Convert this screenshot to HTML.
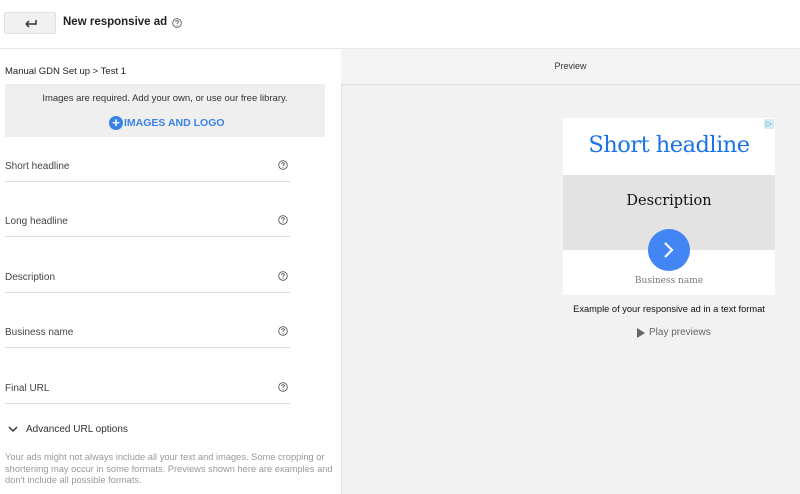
<!DOCTYPE html>
<html><head><style>
*{margin:0;padding:0;box-sizing:border-box}
body{width:800px;height:494px;overflow:hidden;background:#fff;font-family:"Liberation Sans",sans-serif;position:relative;color:#222}
.a{position:absolute}
.help{position:absolute;width:10px;height:10px}
.lbl{position:absolute;left:5px;font-size:10px;color:#444}
.ln{position:absolute;left:5px;width:285px;height:1px;background:#ddd}
.serif{font-family:"DejaVu Serif","Liberation Serif",serif}
</style></head><body>
<svg width="0" height="0" style="position:absolute"><defs><symbol id="h" viewBox="0 0 10 10"><circle cx="5" cy="5" r="4.3" fill="none" stroke="#555" stroke-width="0.9"/><path d="M3.6 4Q3.6 2.7 5 2.7Q6.4 2.7 6.4 3.9Q6.4 4.6 5.5 5Q5 5.3 5 6" fill="none" stroke="#555" stroke-width="0.9"/><circle cx="5" cy="7.3" r="0.55" fill="#555"/></symbol></defs></svg>
<div class="a" style="left:4px;top:12px;width:52px;height:22px;background:#f1f1f1;border:1px solid #e0e0e0;border-radius:2px"><svg class="a" style="left:20px;top:6px" width="12" height="9" viewBox="0 0 12 9"><path d="M1 5H11V1M1 5L4 2M1 5L4 8" fill="none" stroke="#333" stroke-width="1.5"/></svg></div>
<div class="a" style="left:63px;top:16px;font-size:11.5px;font-weight:bold;color:#222">New responsive ad</div>
<svg class="help" style="left:172px;top:18px"><use href="#h"/></svg>
<div class="a" style="left:0;top:48px;width:800px;height:1px;background:#e8e8e8"></div>
<div class="a" style="left:341px;top:49px;width:459px;height:445px;background:#f2f2f2;border-left:1px solid #e3e3e3"></div>
<div class="a" style="left:341px;top:49px;width:459px;height:36px;background:#f4f4f4;border-bottom:1px solid #dcdcdc;font-size:9px;text-align:center;line-height:34px;color:#333">Preview</div>
<div class="a" style="left:5px;top:66px;font-size:9.5px;color:#222">Manual GDN Set up &gt; Test 1</div>
<div class="a" style="left:5px;top:84px;width:320px;height:53px;background:#efefef"></div>
<div class="a" style="left:5px;top:93px;width:320px;text-align:center;font-size:9.5px;color:#333">Images are required. Add your own, or use our free library.</div>
<div class="a" style="left:109px;top:116px;width:14px;height:14px;border-radius:50%;background:#3b82e6;color:#fff;font-size:13px;line-height:14px;text-align:center;font-weight:bold">+</div>
<div class="a" style="left:124px;top:117px;font-size:10.5px;font-weight:bold;color:#3b82e6">IMAGES AND LOGO</div>

<div class="lbl" style="top:161px">Short headline</div><svg class="help" style="left:278px;top:160px"><use href="#h"/></svg><div class="ln" style="top:181px"></div>
<div class="lbl" style="top:216px">Long headline</div><svg class="help" style="left:278px;top:215px"><use href="#h"/></svg><div class="ln" style="top:236px"></div>
<div class="lbl" style="top:272px">Description</div><svg class="help" style="left:278px;top:271px"><use href="#h"/></svg><div class="ln" style="top:292px"></div>
<div class="lbl" style="top:327px">Business name</div><svg class="help" style="left:278px;top:326px"><use href="#h"/></svg><div class="ln" style="top:347px"></div>
<div class="lbl" style="top:383px">Final URL</div><svg class="help" style="left:278px;top:382px"><use href="#h"/></svg><div class="ln" style="top:403px"></div>
<svg class="a" style="left:8px;top:426px" width="10" height="7" viewBox="0 0 10 7"><path d="M1 1L5 5L9 1" fill="none" stroke="#333" stroke-width="1.5"/></svg>
<div class="a" style="left:26px;top:424px;font-size:10px;color:#333">Advanced URL options</div>
<div class="a" style="left:5px;top:452px;width:330px;font-size:9.3px;line-height:11.5px;color:#999">Your ads might not always include all your text and images. Some cropping or shortening may occur in some formats. Previews shown here are examples and don't include all possible formats.</div>

<div class="a" style="left:563px;top:118px;width:212px;height:177px;background:#fff"></div>
<div class="a" style="left:764px;top:119px;width:10px;height:10px;background:#d5ecf3;color:#4ab;font-size:8px;line-height:10px;text-align:center">&#9655;</div>
<div class="a serif" style="left:563px;top:132px;width:212px;text-align:center;font-size:22.5px;color:#1a73e8;letter-spacing:-0.5px">Short headline</div>
<div class="a" style="left:563px;top:175px;width:212px;height:75px;background:#e3e3e3"></div>
<div class="a serif" style="left:563px;top:193px;width:212px;text-align:center;font-size:14.5px;color:#111">Description</div>
<div class="a" style="left:648px;top:229px;width:42px;height:42px;border-radius:50%;background:#4285f4"><svg class="a" style="left:15px;top:12px" width="12" height="18" viewBox="0 0 12 18"><path d="M2 2L9 9L2 16" fill="none" stroke="#fff" stroke-width="2.2"/></svg></div>
<div class="a serif" style="left:563px;top:276px;width:212px;text-align:center;font-size:9px;color:#777">Business name</div>
<div class="a" style="left:563px;top:304px;width:212px;text-align:center;font-size:9.3px;color:#111">Example of your responsive ad in a text format</div>
<svg class="a" style="left:637px;top:328px" width="8" height="10" viewBox="0 0 8 10"><path d="M0 0L8 5L0 10Z" fill="#666"/></svg>
<div class="a" style="left:649px;top:327px;font-size:10px;color:#666">Play previews</div>
</body></html>
